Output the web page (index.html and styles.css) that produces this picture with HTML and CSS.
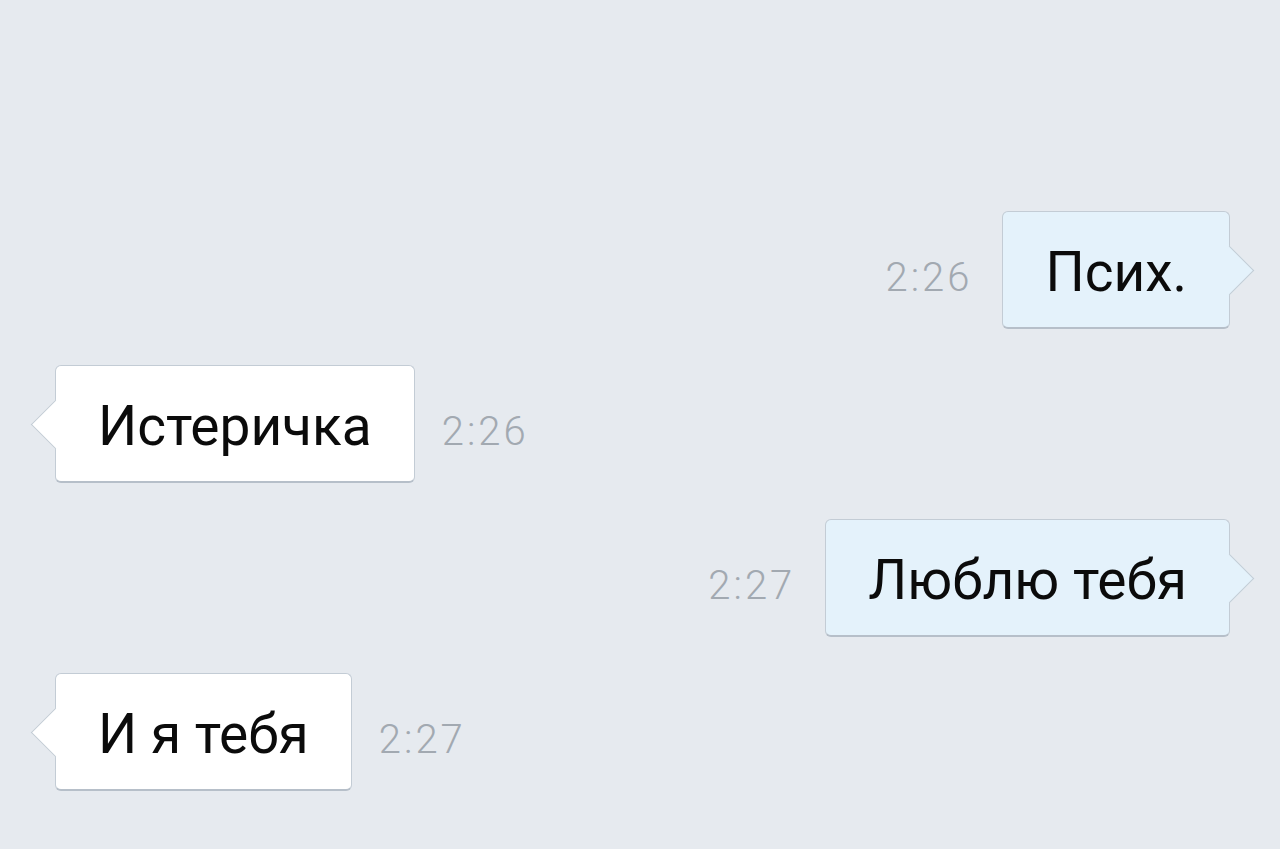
FILE: index.html
```html
<!DOCTYPE html>
<html lang="ru">
<head>
    <meta charset="UTF-8">
    <meta name="viewport" content="width=device-width, initial-scale=1.0">
    <title>Чат</title>
    <link rel="stylesheet" href="styles.css">
</head>
<body>
    <div class="chat">
        <div class="message out">
            <span class="time">2:26</span>
            <div class="bubble">Псих.</div>
        </div>
        <div class="message in">
            <div class="bubble">Истеричка</div>
            <span class="time">2:26</span>
        </div>
        <div class="message out">
            <span class="time">2:27</span>
            <div class="bubble">Люблю тебя</div>
        </div>
        <div class="message in">
            <div class="bubble">И я тебя</div>
            <span class="time">2:27</span>
        </div>
    </div>
</body>
</html>
```

FILE: styles.css
```css
body {
    margin: 0;
    padding: 0;
    width: 1280px;
    height: 849px;
    background: #e6eaef;
    font-family: Roboto, "Noto Sans", sans-serif;
    overflow: hidden;
}

.chat {
    display: flex;
    flex-direction: column;
    gap: 36px;
    padding: 211px 50px 0 55px;
}

.message {
    display: flex;
    align-items: baseline;
}

.message.out {
    justify-content: flex-end;
}

.bubble {
    position: relative;
    line-height: 109px;
    padding: 6px 42px 0;
    font-size: 55px;
    color: #0b0b0b;
    border: 1px solid #c3ccd5;
    border-bottom: 2px solid #b6bfc9;
    border-radius: 6px;
    background: #fff;
}

.out .bubble {
    background: #e4f2fb;
}

.bubble::after {
    content: '';
    position: absolute;
    top: 41px;
    width: 34px;
    height: 34px;
    background: inherit;
    border: 1px solid #c3ccd5;
    transform: rotate(45deg);
}

.out .bubble::after {
    right: -18px;
    border-left: none;
    border-bottom: none;
}

.in .bubble::after {
    left: -18px;
    border-right: none;
    border-top: none;
}

.time {
    font-size: 40px;
    font-weight: 300;
    letter-spacing: 3px;
    color: #a2a9b1;
}

.out .time {
    margin-right: 30px;
}

.in .time {
    margin-left: 27px;
}
```
